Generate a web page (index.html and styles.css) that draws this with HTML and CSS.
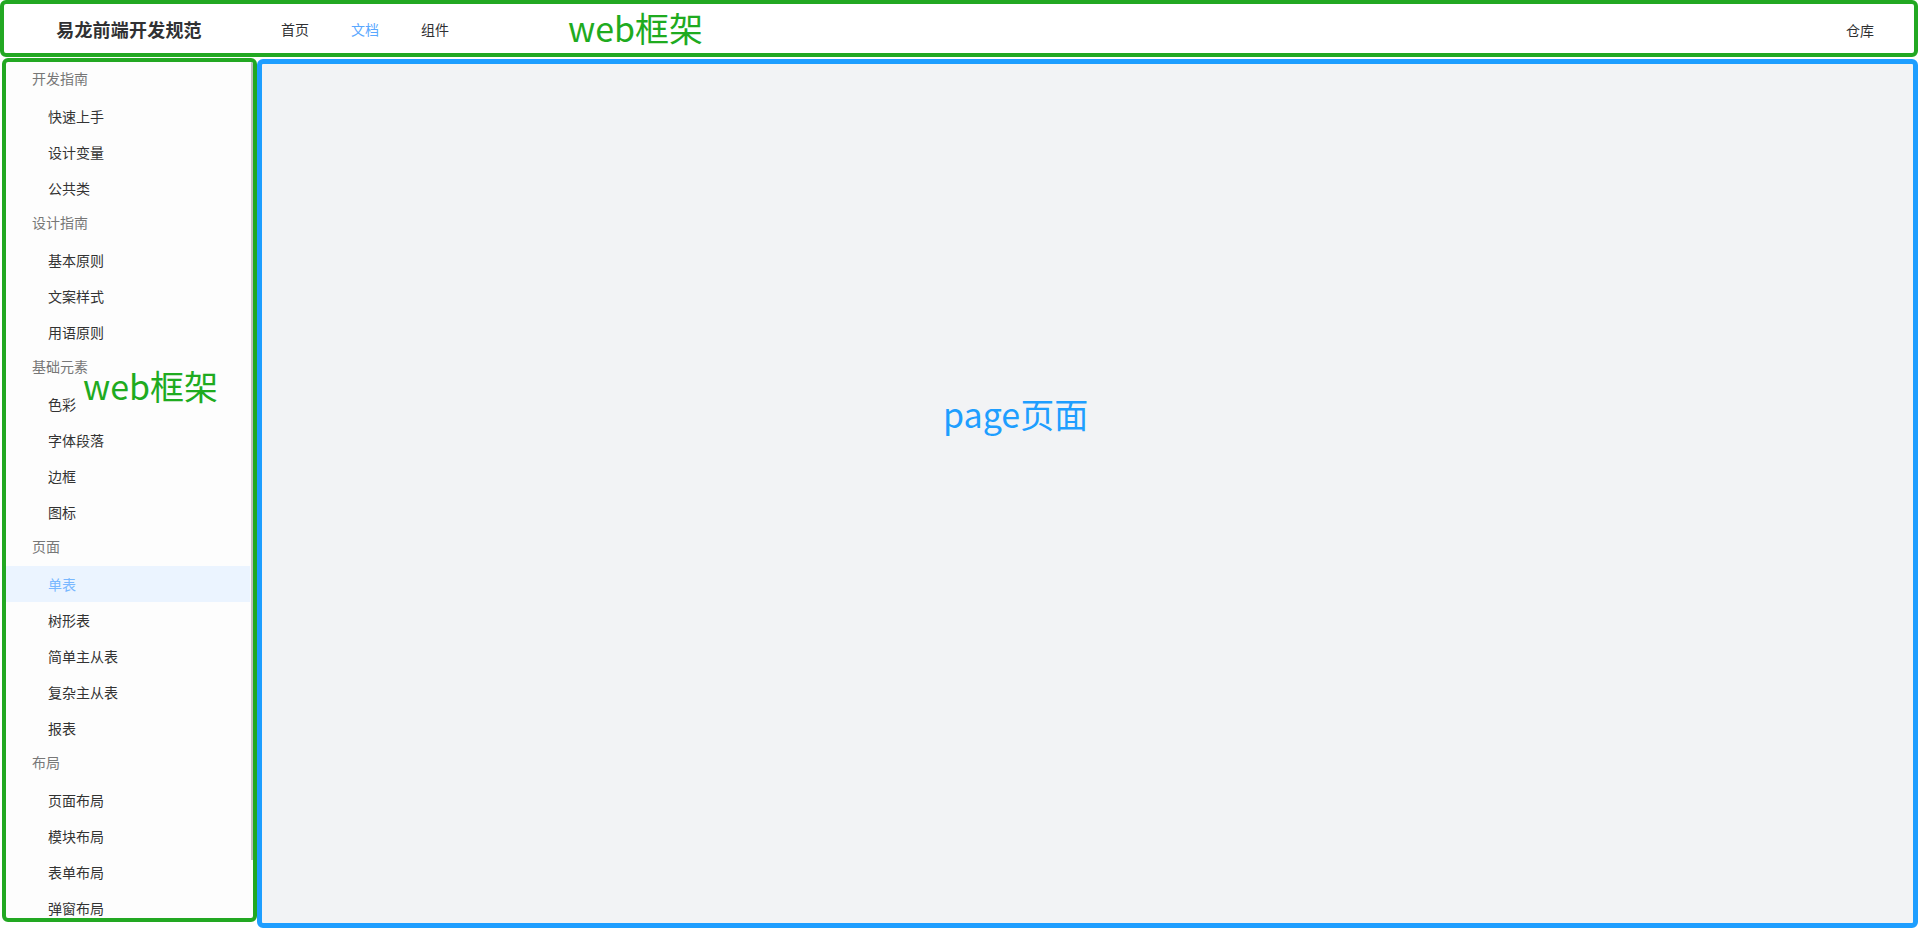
FILE: index.html
```html
<!DOCTYPE html>
<html lang="zh-CN">
<head>
<meta charset="utf-8">
<title>易龙前端开发规范</title>
<link rel="stylesheet" href="styles.css">
</head>
<body>
<div class="app">
  <header class="topbar">
    <div class="logo">易龙前端开发规范</div>
    <ul class="nav">
      <li class="nav-item">首页</li>
      <li class="nav-item active">文档</li>
      <li class="nav-item">组件</li>
    </ul>
    <span class="note note-top">web框架</span>
    <div class="nav-right"><span class="nav-item">仓库</span></div>
  </header>
  <div class="body">
    <aside class="sidebar">
      <nav class="menu">
        <div class="group">开发指南</div>
        <div class="item">快速上手</div>
        <div class="item">设计变量</div>
        <div class="item">公共类</div>
        <div class="group">设计指南</div>
        <div class="item">基本原则</div>
        <div class="item">文案样式</div>
        <div class="item">用语原则</div>
        <div class="group">基础元素</div>
        <div class="item">色彩</div>
        <div class="item">字体段落</div>
        <div class="item">边框</div>
        <div class="item">图标</div>
        <div class="group">页面</div>
        <div class="item active">单表</div>
        <div class="item">树形表</div>
        <div class="item">简单主从表</div>
        <div class="item">复杂主从表</div>
        <div class="item">报表</div>
        <div class="group">布局</div>
        <div class="item">页面布局</div>
        <div class="item">模块布局</div>
        <div class="item">表单布局</div>
        <div class="item">弹窗布局</div>
      </nav>
      <span class="scroll-thumb"></span>
      <span class="note note-side">web框架</span>
    </aside>
    <main class="page">
      <span class="page-label">page页面</span>
    </main>
  </div>
</div>
</body>
</html>
```

FILE: styles.css
```css
* {
  box-sizing: border-box;
}

html, body {
  margin: 0;
  padding: 0;
  background: #ffffff;
}

body {
  font-family: "Noto Sans CJK SC", "Noto Sans", sans-serif;
  color: #303133;
}

.app {
  width: 1920px;
  height: 929px;
  display: flex;
  flex-direction: column;
  overflow: hidden;
}

/* ---------- header ---------- */
.topbar {
  position: relative;
  height: 57px;
  width: 1918px;
  flex: 0 0 auto;
  border: 4px solid #22a822;
  border-radius: 6px;
  background: #ffffff;
  display: flex;
  align-items: center;
}

.logo {
  width: 252px;
  flex: 0 0 auto;
  text-align: center;
  font-size: 18px;
  font-weight: 700;
  line-height: 24px;
  color: #303133;
  margin-left: -1px;
  letter-spacing: 0.2px;
}

.nav {
  list-style: none;
  margin: 0 0 0 5px;
  padding: 0;
  display: flex;
}

.nav-item {
  padding: 0 21px;
  font-size: 14px;
  line-height: 20px;
  color: #303133;
}

.nav-item.active {
  color: #5aa8ff;
}

.nav-right {
  margin-left: auto;
  margin-right: 19px;
}

/* annotations */
.note {
  position: absolute;
  font-size: 34px;
  line-height: 36px;
  color: #1fab1f;
  white-space: nowrap;
}

.note-top {
  left: 564px;
  top: 6px;
}

.note-side {
  left: 77px;
  top: 306px;
}

/* ---------- body ---------- */
.body {
  flex: 1 1 auto;
  display: flex;
  align-items: flex-start;
}

.sidebar {
  position: relative;
  width: 255px;
  height: 864px;
  margin: 1px 0 0 2px;
  flex: 0 0 auto;
  border: 4px solid #22a822;
  border-radius: 6px;
  background: #fdfdfd;
  overflow: hidden;
}

.menu {
  height: 100%;
  overflow: hidden;
  margin-right: 3px;
}

.scroll-thumb {
  position: absolute;
  right: 0;
  top: 0;
  width: 2px;
  height: 798px;
  background: #bdbdbd;
}

.group {
  height: 36px;
  padding: 0 0 4px 26px;
  font-size: 14px;
  line-height: 32px;
  color: #777777;
}

.item {
  height: 36px;
  padding-left: 42px;
  font-size: 14px;
  line-height: 36px;
  color: #333333;
}

.item.active {
  background: #ebf4ff;
  color: #79b8ff;
}

/* ---------- page ---------- */
.page {
  flex: 1 1 auto;
  height: 869px;
  margin: 2px 2px 0 0;
  border: 5px solid #1e9eff;
  border-radius: 6px;
  background: #f2f3f5;
  padding: 332px 0 0 681px;
}

.page-label {
  display: inline-block;
  font-size: 34px;
  line-height: 36px;
  color: #1e9eff;
}
```
